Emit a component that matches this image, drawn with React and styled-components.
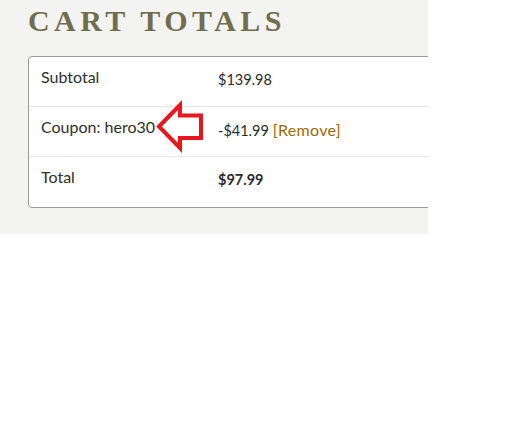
import React from "react";
import styled, { createGlobalStyle } from "styled-components";

const Global = createGlobalStyle`
  html, body { margin: 0; padding: 0; background: #ffffff; }
  body { font-family: Lato, "Noto Sans", sans-serif; }
`;

const Panel = styled.section`
  position: relative;
  width: 428px;
  height: 234px;
  box-sizing: border-box;
  padding: 3px 0 0 28px;
  background: #f3f3f1;
  overflow: hidden;
`;

const Title = styled.h2`
  margin: 0 0 17px;
  font-family: "Liberation Serif", "DejaVu Serif", serif;
  font-size: 30px;
  line-height: 36px;
  font-weight: 700;
  letter-spacing: 4.4px;
  color: #716e4e;
  white-space: nowrap;
`;

const Table = styled.div`
  width: 520px;
  background: #ffffff;
  border: 1px solid #9a9a9a;
  border-radius: 4px;
`;

const Row = styled.div`
  display: grid;
  grid-template-columns: 189px 1fr;
  align-items: start;
  height: 50px;
  box-sizing: border-box;
  padding-top: 8px;
  border-bottom: ${(p) => (p.$last ? "none" : "1px solid #e8e8e6")};
`;

const Label = styled.div`
  padding-left: 12px;
  font-size: 16px;
  line-height: 24px;
  color: #2f2f2f;
  white-space: nowrap;
`;

const Value = styled.div`
  margin-top: 4px;
  font-size: 14.5px;
  line-height: 22px;
  color: #2b2b2b;
  font-weight: ${(p) => (p.$bold ? 700 : 400)};
  white-space: nowrap;
`;

const RemoveLink = styled.a`
  margin-left: 4px;
  color: #9c6a05;
  text-decoration: none;
  font-size: 16px;
  letter-spacing: 0.3px;
`;

const Arrow = styled.svg`
  position: absolute;
  left: 150px;
  top: 98px;
  width: 56px;
  height: 56px;
  overflow: visible;
`;

export default function App() {
  return (
    <>
      <Global />
      <Panel>
        <Title>CART TOTALS</Title>
        <Table>
          <Row>
            <Label>Subtotal</Label>
            <Value>$139.98</Value>
          </Row>
          <Row>
            <Label>Coupon: hero30</Label>
            <Value>
              -$41.99<RemoveLink href="#">[Remove]</RemoveLink>
            </Value>
          </Row>
          <Row $last>
            <Label>Total</Label>
            <Value $bold>$97.99</Value>
          </Row>
        </Table>
        <Arrow viewBox="0 0 56 56">
          <polygon
            points="9,28.5 30,7 30,17.5 51,17.5 51,40 30,40 30,50"
            fill="none"
            stroke="#e8161e"
            strokeWidth="4"
            strokeLinejoin="miter"
          />
        </Arrow>
      </Panel>
    </>
  );
}
